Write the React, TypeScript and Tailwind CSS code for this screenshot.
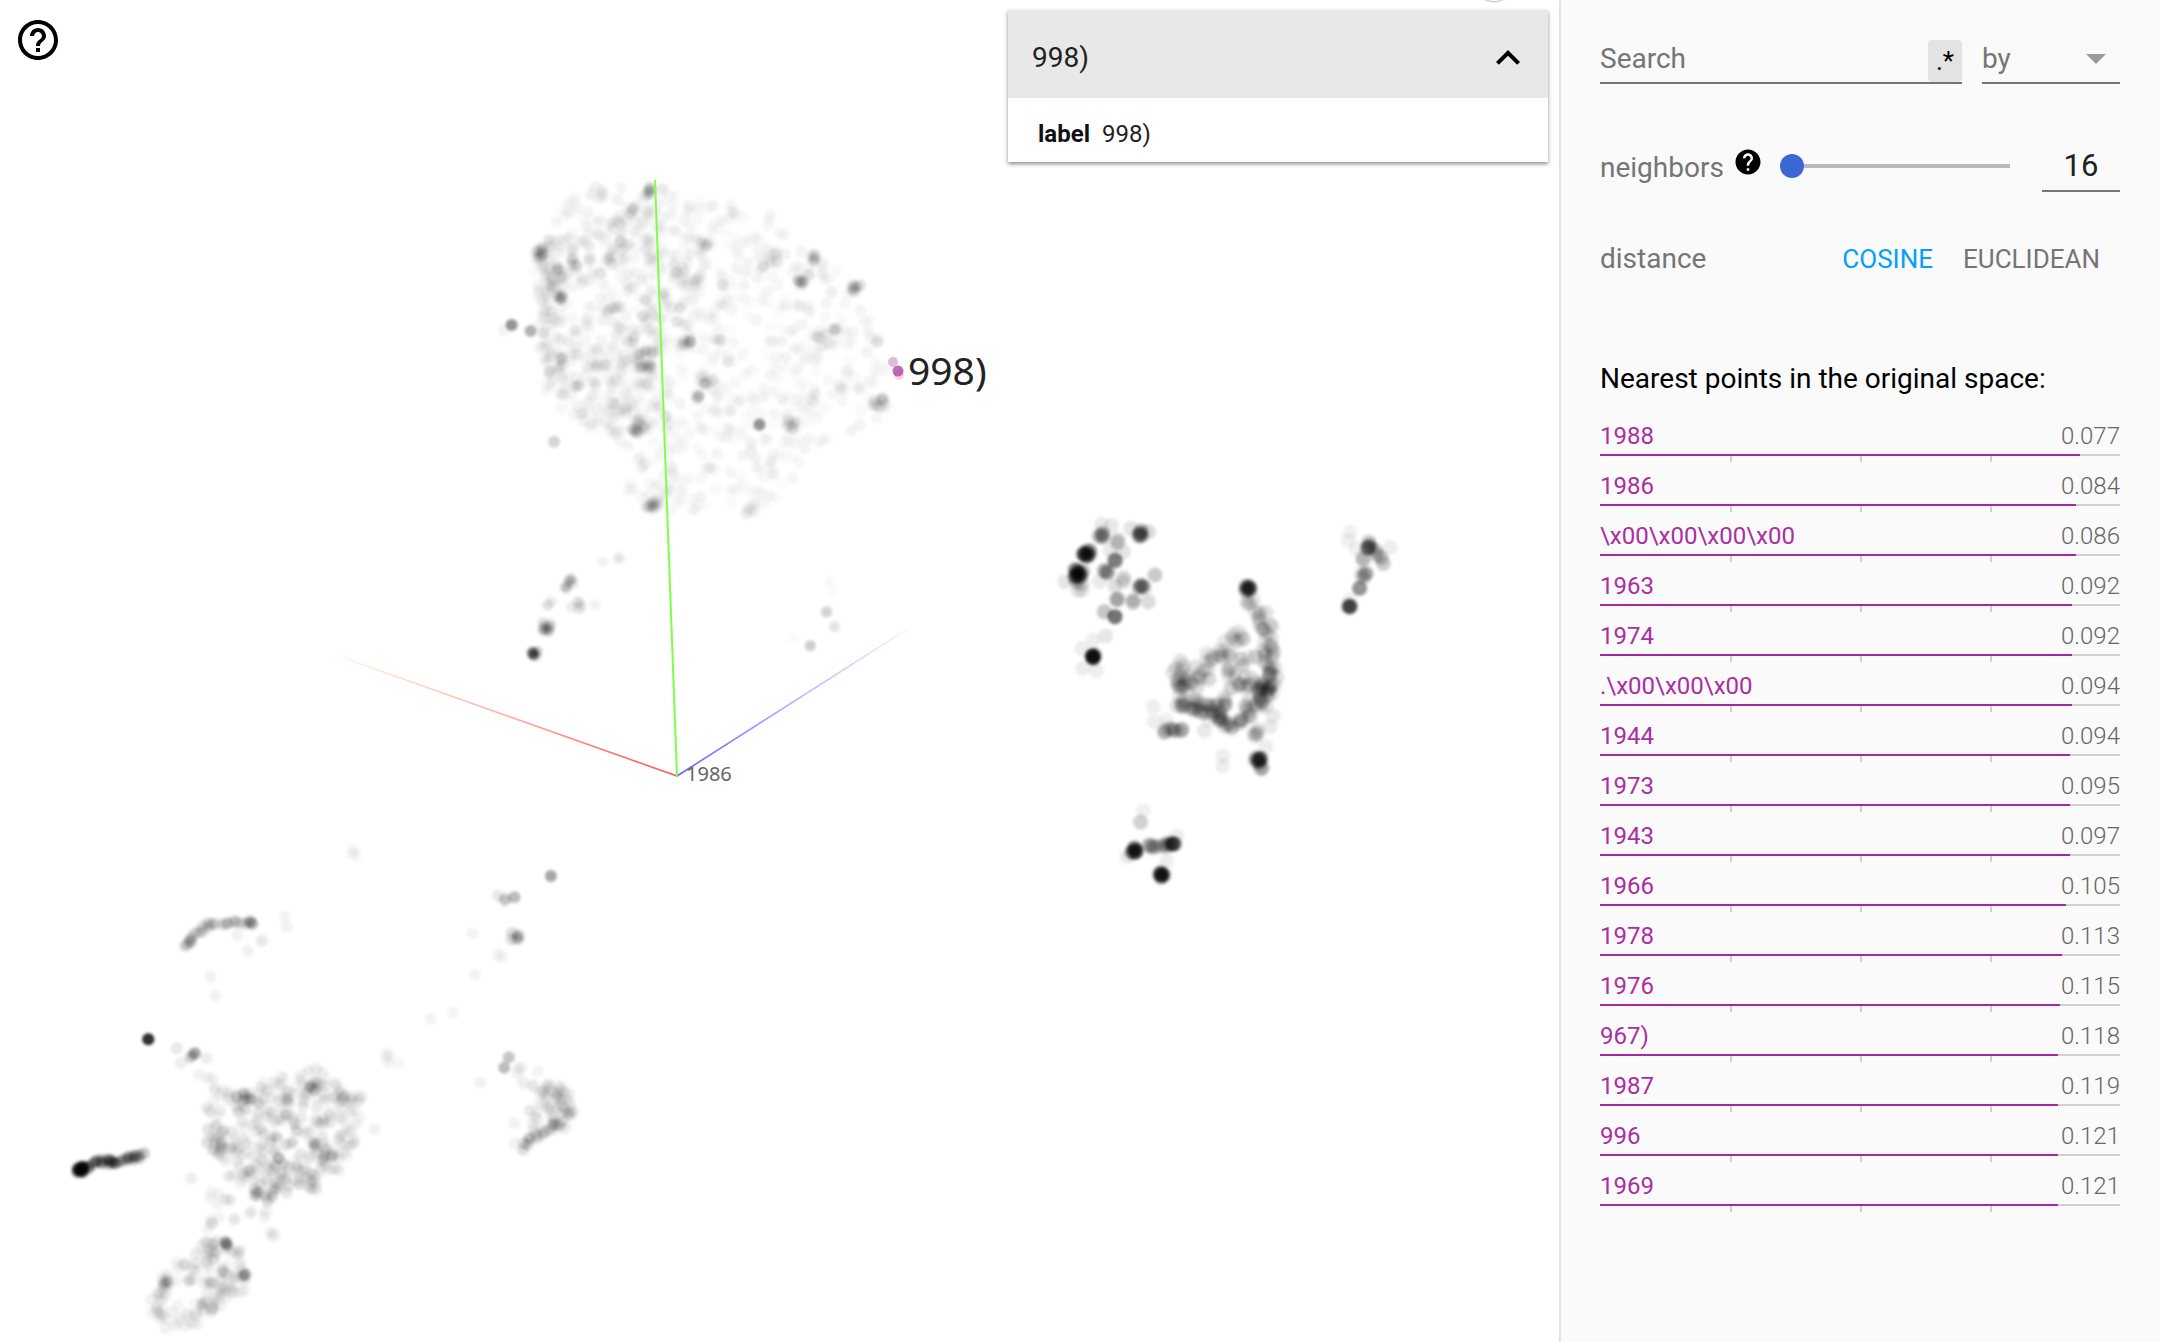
import { useMemo } from "react";

type Pt = [number, number];
type Chain = { pts: Pt[]; n: number; j: number; op: number };
type Area = { poly: Pt[]; n: number; op: number };
// a group of dots, written in the coordinates of a crop, then mapped to the page
type Group = {
  ox: number;
  oy: number;
  sx: number;
  sy: number;
  r: number;
  gain: number;
  spread: number;
  more: number;
  chains: Chain[];
  areas?: Area[];
};

const neighbors = [
  { label: "1988", value: "0.077", width: 480 },
  { label: "1986", value: "0.084", width: 476 },
  { label: "\\x00\\x00\\x00\\x00", value: "0.086", width: 476 },
  { label: "1963", value: "0.092", width: 472 },
  { label: "1974", value: "0.092", width: 472 },
  { label: ".\\x00\\x00\\x00", value: "0.094", width: 472 },
  { label: "1944", value: "0.094", width: 470 },
  { label: "1973", value: "0.095", width: 470 },
  { label: "1943", value: "0.097", width: 470 },
  { label: "1966", value: "0.105", width: 466 },
  { label: "1978", value: "0.113", width: 462 },
  { label: "1976", value: "0.115", width: 460 },
  { label: "967)", value: "0.118", width: 458 },
  { label: "1987", value: "0.119", width: 458 },
  { label: "996", value: "0.121", width: 458 },
  { label: "1969", value: "0.121", width: 458 },
];

function spot(x: number, y: number, n: number, j: number, op: number): Chain {
  return { pts: [[x, y]], n, j, op };
}

const groups: Group[] = [
  // top cloud
  {
    ox: 480,
    oy: 160,
    sx: 1 / 2.904,
    sy: 1 / 3,
    r: 6,
    gain: 0.55,
    spread: 1.6,
    more: 1.5,
    areas: [
      {
        poly: [
          [270, 110], [480, 70], [600, 120], [820, 130], [980, 290], [1100, 380], [1200, 600], [1170, 780],
          [1000, 850], [850, 1040], [750, 1050], [540, 1060], [490, 1070], [430, 1000], [420, 870], [200, 730],
          [170, 560], [150, 250],
        ],
        n: 760,
        op: 0.03,
      },
      {
        poly: [[150, 250], [520, 120], [560, 800], [420, 840], [180, 700]],
        n: 220,
        op: 0.045,
      },
    ],
    chains: [
      spot(180, 280, 9, 14, 0.13), spot(210, 350, 9, 22, 0.1), spot(230, 410, 3, 6, 0.2), spot(270, 305, 3, 10, 0.15),
      spot(475, 600, 10, 18, 0.14), spot(465, 500, 4, 20, 0.1), spot(600, 550, 3, 8, 0.2), spot(600, 340, 7, 25, 0.1),
      spot(570, 460, 6, 25, 0.1), spot(660, 660, 3, 10, 0.15), spot(635, 710, 2, 4, 0.2), spot(810, 795, 2, 2, 0.3),
      spot(910, 795, 3, 10, 0.18), spot(1160, 725, 5, 12, 0.16), spot(1095, 390, 3, 10, 0.22), spot(940, 355, 4, 10, 0.2),
      spot(970, 295, 2, 6, 0.22), spot(850, 310, 4, 18, 0.12), spot(460, 800, 5, 14, 0.18), spot(495, 1030, 6, 12, 0.16),
      spot(790, 1045, 3, 12, 0.1), spot(92, 495, 1, 0, 0.75), spot(147, 513, 1, 0, 0.55), spot(185, 520, 1, 0, 0.22),
      spot(70, 510, 1, 0, 0.08), spot(215, 845, 1, 0, 0.3), spot(480, 95, 4, 10, 0.18), spot(340, 98, 3, 12, 0.1),
      spot(530, 88, 1, 0, 0.15), spot(700, 545, 2, 6, 0.1), spot(990, 540, 4, 14, 0.12), spot(1030, 505, 2, 4, 0.15),
      spot(705, 375, 1, 0, 0.2), spot(655, 255, 3, 12, 0.1), spot(720, 605, 1, 0, 0.15), spot(230, 605, 3, 10, 0.12),
      spot(280, 680, 2, 6, 0.12), spot(450, 145, 3, 10, 0.1), spot(1140, 555, 3, 14, 0.08),
    ],
  },
  // right group
  {
    ox: 1040,
    oy: 500,
    sx: 1 / 3,
    sy: 1 / 3,
    r: 7.5,
    gain: 0.68,
    spread: 1.5,
    more: 1.6,
    areas: [
      {
        poly: [[605, 380], [690, 340], [710, 560], [670, 640], [560, 690], [420, 620], [400, 510], [520, 470]],
        n: 46,
        op: 0.11,
      },
    ],
    chains: [
      spot(185, 72, 1, 0, 0.12), spot(215, 76, 1, 0, 0.12), spot(180, 108, 4, 7, 0.22), spot(240, 120, 2, 8, 0.16),
      spot(300, 100, 6, 6, 0.2), spot(325, 95, 1, 0, 0.2), spot(272, 85, 1, 0, 0.15), spot(140, 160, 9, 7, 0.3),
      spot(118, 222, 12, 9, 0.28), spot(122, 258, 3, 10, 0.15), spot(75, 245, 1, 0, 0.14), spot(225, 183, 3, 3, 0.2),
      spot(200, 220, 3, 6, 0.22), spot(250, 155, 1, 0, 0.15), spot(210, 150, 1, 0, 0.12), spot(178, 245, 1, 0, 0.12),
      spot(245, 240, 2, 6, 0.14), spot(225, 258, 1, 0, 0.18), spot(230, 297, 2, 3, 0.2), spot(225, 350, 1, 0, 0.8),
      spot(190, 332, 2, 4, 0.12), spot(305, 260, 4, 6, 0.25), spot(345, 225, 1, 0, 0.3), spot(285, 305, 2, 4, 0.18),
      spot(325, 305, 1, 0, 0.2), spot(160, 470, 5, 3, 0.45), spot(125, 445, 1, 0, 0.1), spot(160, 420, 1, 0, 0.1),
      spot(197, 408, 1, 0, 0.14), spot(128, 505, 1, 0, 0.1), spot(170, 512, 1, 0, 0.1),
      spot(625, 265, 6, 5, 0.3), spot(630, 305, 3, 8, 0.12),
      { pts: [[660, 330], [685, 400], [690, 500], [700, 560], [665, 620]], n: 26, j: 10, op: 0.16 },
      { pts: [[605, 395], [570, 440], [520, 480], [570, 525]], n: 12, j: 16, op: 0.12 },
      { pts: [[410, 500], [430, 570], [480, 515]], n: 14, j: 16, op: 0.16 },
      { pts: [[610, 550], [690, 560], [640, 600]], n: 16, j: 14, op: 0.16 },
      { pts: [[410, 615], [470, 625], [530, 630], [560, 600]], n: 16, j: 10, op: 0.17 },
      { pts: [[530, 640], [570, 680], [630, 650]], n: 10, j: 6, op: 0.2 },
      { pts: [[370, 695], [430, 685]], n: 6, j: 4, op: 0.2 },
      spot(340, 620, 1, 0, 0.1), spot(343, 665, 1, 0, 0.1), spot(380, 660, 1, 0, 0.08), spot(493, 692, 1, 0, 0.12),
      spot(550, 768, 1, 0, 0.1), spot(548, 798, 1, 0, 0.1), spot(700, 648, 1, 0, 0.12), spot(690, 680, 1, 0, 0.12),
      spot(650, 700, 3, 8, 0.15), spot(678, 740, 1, 0, 0.1), spot(655, 780, 6, 6, 0.3), spot(665, 805, 2, 3, 0.2),
      { pts: [[985, 130], [1028, 188]], n: 4, j: 3, op: 0.28 },
      spot(985, 140, 3, 5, 0.25), spot(930, 97, 1, 0, 0.08), spot(925, 122, 1, 0, 0.08), spot(948, 145, 1, 0, 0.08),
      spot(1050, 142, 1, 0, 0.1), spot(970, 180, 2, 4, 0.16), spot(972, 225, 3, 5, 0.2), spot(955, 265, 2, 3, 0.25),
      spot(928, 320, 3, 2, 0.35), spot(928, 300, 1, 0, 0.08),
      spot(310, 932, 1, 0, 0.08), spot(305, 965, 2, 4, 0.1), spot(282, 1050, 6, 5, 0.35), spot(262, 1070, 1, 0, 0.12),
      { pts: [[320, 1040], [400, 1032]], n: 8, j: 5, op: 0.2 }, spot(400, 1034, 4, 4, 0.3), spot(410, 1008, 1, 0, 0.1),
      spot(380, 1082, 1, 0, 0.1), spot(365, 1125, 6, 5, 0.35),
    ],
  },
  // bottom left group
  {
    ox: 40,
    oy: 840,
    sx: 1 / 2.613,
    sy: 1 / 3,
    r: 6,
    gain: 0.62,
    spread: 1.5,
    more: 1.4,
    areas: [
      {
        poly: [[430, 780], [530, 740], [720, 680], [840, 760], [840, 880], [780, 1000], [600, 1090], [500, 1020], [430, 930]],
        n: 300,
        op: 0.06,
      },
      {
        poly: [[440, 1190], [540, 1230], [530, 1340], [440, 1440], [320, 1460], [290, 1350], [390, 1250]],
        n: 70,
        op: 0.06,
      },
      {
        poly: [[1330, 730], [1395, 800], [1350, 870], [1265, 925], [1270, 800]],
        n: 40,
        op: 0.06,
      },
    ],
    chains: [
      spot(105, 988, 14, 6, 0.42),
      { pts: [[100, 990], [160, 965], [205, 965], [270, 945]], n: 24, j: 5, op: 0.34 },
      spot(283, 598, 2, 0, 0.7),
      { pts: [[385, 325], [400, 285], [440, 255], [490, 243], [550, 247]], n: 16, j: 5, op: 0.2 },
      spot(552, 247, 2, 4, 0.25), spot(640, 230, 1, 0, 0.07), spot(645, 262, 1, 0, 0.08), spot(580, 302, 1, 0, 0.14),
      spot(515, 285, 1, 0, 0.08), spot(543, 333, 1, 0, 0.08), spot(445, 410, 1, 0, 0.08), spot(458, 467, 1, 0, 0.08),
      spot(820, 35, 4, 8, 0.03), spot(1335, 108, 1, 0, 0.55), spot(1240, 172, 1, 0, 0.42), spot(1205, 175, 3, 8, 0.14),
      spot(1240, 290, 4, 8, 0.2), spot(1130, 280, 1, 0, 0.07), spot(1200, 340, 2, 10, 0.05), spot(1137, 405, 1, 0, 0.07),
      spot(1080, 518, 1, 0, 0.07), spot(1022, 537, 1, 0, 0.07), spot(920, 655, 4, 14, 0.05),
      spot(400, 645, 3, 5, 0.25), spot(357, 625, 1, 0, 0.14), spot(368, 668, 1, 0, 0.11), spot(435, 655, 1, 0, 0.11),
      { pts: [[415, 710], [500, 770]], n: 6, j: 8, op: 0.08 },
      spot(550, 785, 8, 18, 0.13), spot(715, 735, 4, 10, 0.13), spot(780, 775, 4, 12, 0.12), spot(470, 915, 5, 14, 0.12),
      spot(625, 965, 3, 8, 0.2), spot(730, 930, 5, 12, 0.14), spot(762, 945, 2, 4, 0.14), spot(570, 1060, 5, 14, 0.14),
      spot(600, 1080, 2, 6, 0.14), spot(545, 1000, 3, 10, 0.12), spot(710, 1030, 4, 14, 0.1), spot(395, 1015, 1, 0, 0.11),
      spot(875, 868, 1, 0, 0.08),
      { pts: [[460, 1050], [455, 1130], [445, 1160]], n: 7, j: 10, op: 0.07 }, spot(508, 1138, 1, 0, 0.16),
      spot(490, 1080, 2, 8, 0.09), spot(570, 1120, 3, 20, 0.09), spot(600, 1185, 2, 8, 0.08),
      { pts: [[445, 1210], [420, 1290], [470, 1320], [520, 1340]], n: 16, j: 20, op: 0.08 },
      { pts: [[520, 1340], [440, 1400], [380, 1450], [320, 1440], [300, 1360], [330, 1320], [345, 1285]], n: 24, j: 14, op: 0.08 },
      spot(493, 1212, 4, 8, 0.2), spot(535, 1305, 2, 3, 0.25), spot(325, 1325, 3, 8, 0.15), spot(440, 1395, 4, 12, 0.13),
      spot(1225, 652, 1, 0, 0.36), spot(1213, 683, 1, 0, 0.42), spot(1150, 728, 1, 0, 0.08), spot(1240, 690, 2, 20, 0.08),
      spot(1300, 695, 1, 0, 0.07), spot(1263, 728, 1, 0, 0.11), spot(1288, 738, 1, 0, 0.16),
      { pts: [[1320, 760], [1360, 750], [1385, 800], [1355, 855]], n: 14, j: 12, op: 0.12 },
      { pts: [[1265, 925], [1290, 885], [1355, 855]], n: 8, j: 6, op: 0.2 },
      spot(1240, 850, 1, 0, 0.08), spot(1240, 910, 1, 0, 0.08),
    ],
  },
  // small pieces next to the axes
  {
    ox: 320,
    oy: 550,
    sx: 1 / 2.529,
    sy: 1 / 3,
    r: 5.5,
    gain: 0.8,
    spread: 1.3,
    more: 1.3,
    chains: [
      spot(542, 310, 7, 6, 0.2), spot(570, 230, 7, 10, 0.16), spot(630, 100, 6, 12, 0.12), spot(648, 165, 4, 10, 0.1),
      spot(582, 160, 2, 8, 0.08), spot(695, 165, 1, 0, 0.06), spot(715, 35, 1, 0, 0.06), spot(755, 20, 2, 6, 0.05),
      spot(1240, 287, 1, 0, 0.24), spot(1280, 185, 2, 4, 0.08), spot(1297, 225, 2, 6, 0.05), spot(1285, 110, 2, 14, 0.02),
      spot(1195, 265, 1, 0, 0.02),
    ],
  },
];

function inside(p: Pt, poly: Pt[]) {
  let hit = false;
  for (let i = 0, j = poly.length - 1; i < poly.length; j = i++) {
    const [xi, yi] = poly[i];
    const [xj, yj] = poly[j];
    if (yi > p[1] !== yj > p[1] && p[0] < ((xj - xi) * (p[1] - yi)) / (yj - yi) + xi) hit = !hit;
  }
  return hit;
}

function buildDots() {
  // small seeded generator, so the picture is the same on every load
  let seed = 20190412;
  const rnd = () => {
    seed = (seed + 0x6d2b79f5) | 0;
    let t = Math.imul(seed ^ (seed >>> 15), 1 | seed);
    t = (t + Math.imul(t ^ (t >>> 7), 61 | t)) ^ t;
    return ((t ^ (t >>> 14)) >>> 0) / 4294967296;
  };
  const dots: { x: number; y: number; r: number; op: number }[] = [];
  for (const g of groups) {
    const add = (x: number, y: number, op: number) =>
      dots.push({ x: g.ox + x * g.sx, y: g.oy + y * g.sy, r: g.r, op });
    for (const a of g.areas ?? []) {
      const xs = a.poly.map((p) => p[0]);
      const ys = a.poly.map((p) => p[1]);
      const [x0, x1, y0, y1] = [Math.min(...xs), Math.max(...xs), Math.min(...ys), Math.max(...ys)];
      let left = a.n;
      while (left > 0) {
        const p: Pt = [x0 + rnd() * (x1 - x0), y0 + rnd() * (y1 - y0)];
        if (inside(p, a.poly)) {
          add(p[0], p[1], a.op * (0.5 + rnd()));
          left--;
        }
      }
    }
    for (const c of g.chains) {
      const n = c.n > 1 ? Math.round(c.n * g.more) : c.n;
      const j = c.j * g.spread;
      for (let i = 0; i < n; i++) {
        const t = c.pts.length > 1 ? (i / Math.max(1, n - 1)) * (c.pts.length - 1) : 0;
        const k = Math.min(Math.floor(t), c.pts.length - 1);
        const a = c.pts[k];
        const b = c.pts[Math.min(k + 1, c.pts.length - 1)];
        const f = t - k;
        add(
          a[0] + (b[0] - a[0]) * f + (rnd() - 0.5) * 2 * j,
          a[1] + (b[1] - a[1]) * f + (rnd() - 0.5) * 2 * j,
          c.op * g.gain,
        );
      }
    }
  }
  return dots;
}

function Projection() {
  const dots = useMemo(buildDots, []);
  return (
    <svg className="absolute inset-0 h-full w-full" viewBox="0 0 1559 1342">
      <defs>
        <filter id="soft" x="-5%" y="-5%" width="110%" height="110%">
          <feGaussianBlur stdDeviation="1.4" />
        </filter>
        <linearGradient id="axisX" gradientUnits="userSpaceOnUse" x1="677" y1="776" x2="344" y2="658">
          <stop offset="0" stopColor="#ff5050" />
          <stop offset="0.5" stopColor="#ffb0a0" />
          <stop offset="1" stopColor="#fff4ea" />
        </linearGradient>
        <linearGradient id="axisZ" gradientUnits="userSpaceOnUse" x1="677" y1="776" x2="909" y2="628">
          <stop offset="0" stopColor="#6060ff" />
          <stop offset="0.5" stopColor="#b0b8ff" />
          <stop offset="1" stopColor="#f6f9ff" />
        </linearGradient>
      </defs>
      <g filter="url(#soft)">
        {dots.map((d, i) => (
          <circle key={i} cx={d.x} cy={d.y} r={d.r} fill="#000" fillOpacity={d.op} />
        ))}
      </g>
      <line x1="677" y1="776" x2="344" y2="658" stroke="url(#axisX)" strokeWidth="1.6" />
      <line x1="677" y1="776" x2="909" y2="628" stroke="url(#axisZ)" strokeWidth="1.6" />
      <line x1="677" y1="776" x2="655" y2="180" stroke="#7fff45" strokeWidth="2" />
      <circle cx="893" cy="362" r="5" fill="#b060b0" fillOpacity="0.4" />
      <circle cx="899" cy="375" r="5" fill="#ff9090" fillOpacity="0.4" />
      <circle cx="898" cy="371" r="5.5" fill="#a83ca8" fillOpacity="0.75" />
      <text x="908" y="385" fontFamily="'Noto Sans', sans-serif" fontSize="39" fill="#222">
        998)
      </text>
      <text x="686" y="781" fontFamily="'Noto Sans', sans-serif" fontSize="20" fill="#666">
        1986
      </text>
    </svg>
  );
}

function HelpFilled() {
  return (
    <svg width="30" height="30" viewBox="0 0 24 24" fill="#000" className="shrink-0 -translate-y-[3px]">
      <path d="M12 2C6.48 2 2 6.48 2 12s4.48 10 10 10 10-4.48 10-10S17.52 2 12 2zm1 17h-2v-2h2v2zm2.07-7.75l-.9.92C13.45 12.9 13 13.5 13 15h-2v-.5c0-1.1.45-2.1 1.17-2.83l1.24-1.26c.37-.36.59-.86.59-1.41 0-1.1-.9-2-2-2s-2 .9-2 2H8c0-2.21 1.79-4 4-4s4 1.79 4 4c0 .88-.36 1.68-.93 2.25z" />
    </svg>
  );
}

function NeighborRow({ label, value, width }: { label: string; value: string; width: number }) {
  return (
    <div className="relative flex h-[50px] flex-col justify-end">
      <div className="mb-[4px] flex items-center justify-between text-[24px] leading-7">
        <span className="text-[#ab2ea3]">{label}</span>
        <span className="font-light text-[#666]">{value}</span>
      </div>
      <div className="h-[2px] bg-[#d0d0d0]">
        <div className="h-full bg-[#a626a4]" style={{ width }} />
      </div>
      {/* quarter ticks hang below the bar */}
      <div className="absolute left-[130px] top-[50px] h-[6px] w-[2px] bg-[#d0d0d0]" />
      <div className="absolute left-[260px] top-[50px] h-[6px] w-[2px] bg-[#d0d0d0]" />
      <div className="absolute left-[390px] top-[50px] h-[6px] w-[2px] bg-[#d0d0d0]" />
    </div>
  );
}

export default function App() {
  return (
    <div className="flex h-[1342px] w-full overflow-hidden bg-white font-['Roboto',sans-serif]">
      {/* Scatter */}
      <div className="relative w-[1559px] shrink-0">
        <Projection />
        <svg width="48" height="48" viewBox="0 0 24 24" fill="#000" className="absolute left-[14px] top-[16px]">
          <path d="M11 18h2v-2h-2v2zm1-16C6.48 2 2 6.48 2 12s4.48 10 10 10 10-4.48 10-10S17.52 2 12 2zm0 18c-4.41 0-8-3.59-8-8s3.59-8 8-8 8 3.59 8 8-3.59 8-8 8zm0-14c-2.21 0-4 1.79-4 4h2c0-1.1.9-2 2-2s2 .9 2 2c0 2-3 1.75-3 5h2c0-2.25 3-2.5 3-5 0-2.21-1.79-4-4-4z" />
        </svg>
        <div className="absolute left-[1475px] top-[-37px] h-[38px] w-[38px] rounded-full bg-white shadow-[0_1px_2px_rgba(0,0,0,0.3)]" />

        {/* Metadata card */}
        <div className="absolute left-[1008px] top-[10px] w-[540px] bg-white shadow-[0_2px_4px_rgba(0,0,0,0.45)]">
          <div className="flex h-[88px] items-center justify-between bg-[#e8e8e8] pl-[24px] pr-[16px] pt-[8px]">
            <span className="text-[28px] text-[#212121]">998)</span>
            <svg width="48" height="48" viewBox="0 0 24 24" fill="#000">
              <path d="M12 8l-6 6 1.41 1.41L12 10.83l4.59 4.58L18 14z" />
            </svg>
          </div>
          <div className="flex h-[64px] items-center gap-[12px] pl-[30px] pt-[7px] text-[24px]">
            <span className="font-bold text-[#111]">label</span>
            <span className="text-[#212121]">998)</span>
          </div>
        </div>
      </div>

      {/* Inspector */}
      <div className="flex-1 border-l-2 border-[#e3e3e3] bg-[#fafafa] pl-[39px] pr-[40px] pt-[40px] text-[28px] text-[#757575]">
        <div className="flex gap-[20px]">
          <div className="flex h-[44px] w-[362px] items-center justify-between border-b-2 border-[#757575] pb-[4px]">
            <span>Search</span>
            <span className="flex h-[42px] w-[34px] items-start justify-center self-start rounded-[4px] bg-[#e3e3e3] pt-[2px] text-[26px] text-black">
              .*
            </span>
          </div>
          <div className="flex h-[44px] flex-1 items-center justify-between border-b-2 border-[#757575] pb-[4px] pr-[14px]">
            <span>by</span>
            <span className="h-0 w-0 border-x-[10px] border-t-[10px] border-x-transparent border-t-[#9b9b9b]" />
          </div>
        </div>

        <div className="mt-[54px] flex h-[54px] items-center">
          <span className="translate-y-[3px]">neighbors</span>
          <span className="ml-[9px] flex">
            <HelpFilled />
          </span>
          <div className="ml-[17px] flex w-[230px] translate-y-[1px] items-center">
            <div className="h-6 w-6 shrink-0 rounded-full bg-[#3b66d6]" />
            <div className="h-[4px] flex-1 bg-[#b9b9b9]" />
          </div>
          <div className="ml-auto flex h-[54px] w-[78px] items-center justify-center border-b-2 border-[#757575] pt-[4px] text-[31px] text-[#212121]">
            16
          </div>
        </div>

        <div className="mt-[47px] flex h-[40px] items-center">
          <span>distance</span>
          <div className="ml-auto flex gap-[30px] pr-[20px] text-[26px]">
            <span className="text-[#03a0f8]">COSINE</span>
            <span>EUCLIDEAN</span>
          </div>
        </div>

        <div className="mt-[82px] flex h-[36px] items-center text-black">Nearest points in the original space:</div>

        <div className="mt-[9px]">
          {neighbors.map((n) => (
            <NeighborRow key={n.label} {...n} />
          ))}
        </div>
      </div>
    </div>
  );
}
